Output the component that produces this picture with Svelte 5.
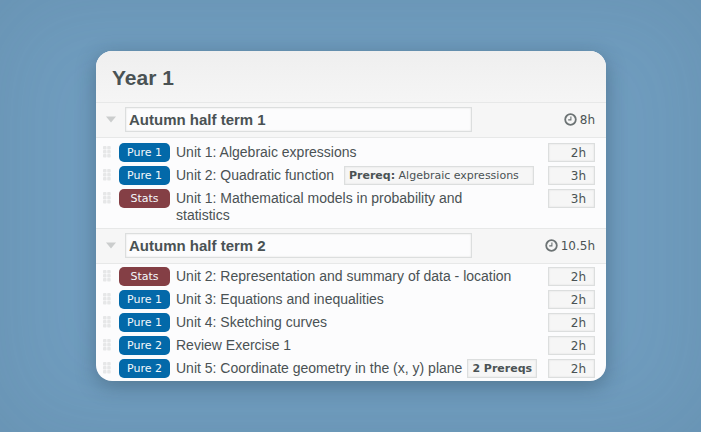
<script>
  let terms = $state([
    {
      name: 'Autumn half term 1',
      total: '8h',
      open: true,
      units: [
        { module: 'Pure 1', title: 'Unit 1: Algebraic expressions', hours: '2h' },
        { module: 'Pure 1', title: 'Unit 2: Quadratic function', hours: '3h', prereq: 'Algebraic expressions' },
        { module: 'Stats', title: 'Unit 1: Mathematical models in probability and statistics', hours: '3h' }
      ]
    },
    {
      name: 'Autumn half term 2',
      total: '10.5h',
      open: true,
      units: [
        { module: 'Stats', title: 'Unit 2: Representation and summary of data - location', hours: '2h' },
        { module: 'Pure 1', title: 'Unit 3: Equations and inequalities', hours: '2h' },
        { module: 'Pure 1', title: 'Unit 4: Sketching curves', hours: '2h' },
        { module: 'Pure 2', title: 'Review Exercise 1', hours: '2h' },
        { module: 'Pure 2', title: 'Unit 5: Coordinate geometry in the (x, y) plane', hours: '2h', prereqCount: 2 }
      ]
    }
  ]);
</script>

<main class="page">
  <article class="planner">
    <header class="year">
      <h1>Year 1</h1>
    </header>

    {#each terms as term}
      <section>
        <div class="term-header">
          <button
            class="toggle"
            class:closed={!term.open}
            onclick={() => (term.open = !term.open)}
            aria-label="Toggle term"
            aria-expanded={term.open}
          >
            <svg width="12" height="7" viewBox="0 0 12 7">
              <path d="M1 0.5h10L6 6.5z" fill="#cbcdcd" />
            </svg>
          </button>
          <input class="term-name" type="text" bind:value={term.name} aria-label="Term name" />
          <div class="total">
            <svg width="13" height="13" viewBox="0 0 13 13" fill="none" stroke="currentColor">
              <circle cx="6.5" cy="6.5" r="5.3" stroke-width="1.8" />
              <path d="M6.9 3.4v3.5H4.2" stroke-width="1.1" />
            </svg>
            <span>{term.total}</span>
          </div>
        </div>

        {#if term.open}
          <ul class="units">
            {#each term.units as unit}
              <li class="unit">
                <svg class="handle" width="8" height="12" viewBox="0 0 8 12" fill="#e6e7e8">
                  {#each [0, 4, 8] as y}
                    <rect x="0" {y} width="3.5" height="3.5" rx="0.8" />
                    <rect x="4.2" {y} width="3.5" height="3.5" rx="0.8" />
                  {/each}
                </svg>
                <span class="module" class:stats={unit.module === 'Stats'}>{unit.module}</span>
                <div class="body">
                  <span class="title">{unit.title}</span>
                  {#if unit.prereq}
                    <button class="prereq detail"><b>Prereq:</b> {unit.prereq}</button>
                  {:else if unit.prereqCount}
                    <button class="prereq"><b>{unit.prereqCount} Prereqs</b></button>
                  {/if}
                </div>
                <input class="hours" type="text" bind:value={unit.hours} aria-label="Hours" />
              </li>
            {/each}
          </ul>
        {/if}
      </section>
    {/each}
  </article>
</main>

<style>
  :global(body) {
    margin: 0;
  }

  .page {
    box-sizing: border-box;
    min-height: 100vh;
    padding: 51px 95px 51px 96px;
    background: #709dbf;
    box-shadow: inset 0 0 100px rgba(60, 95, 115, 0.16);
    color: #4a5254;
    font-family: 'DejaVu Sans', Verdana, sans-serif;
  }

  .planner {
    overflow: hidden;
    border-radius: 16px;
    background: #fcfcfd;
    box-shadow: 0 5px 20px rgba(30, 50, 65, 0.35);
  }

  .year {
    display: flex;
    align-items: center;
    height: 51px;
    padding: 0 16px;
    background: linear-gradient(#efefef, #f5f5f5);
  }

  h1 {
    margin: 0;
    padding-top: 2px;
    font: bold 21px/24px 'Liberation Sans', Arial, sans-serif;
  }

  /* Term bar */
  .term-header {
    display: flex;
    align-items: center;
    padding: 4px 11px 5px 9px;
    border-top: 1px solid #e7e8e8;
    border-bottom: 1px solid #e7e8e8;
    background: #f6f6f6;
  }

  .toggle {
    display: flex;
    width: 12px;
    margin-right: 8px;
    padding: 0;
    border: none;
    background: none;
    cursor: pointer;
  }

  .toggle.closed svg {
    transform: rotate(-90deg);
  }

  .term-name {
    box-sizing: border-box;
    flex: 0 1 347px;
    min-width: 0;
    height: 25px;
    padding: 0 3px;
    border: 1px solid #dcdede;
    border-radius: 0;
    background: #fcfcfd;
    box-shadow: inset 0 0 2px #dcdede;
    color: inherit;
    font: bold 15px/20px 'Liberation Sans', Arial, sans-serif;
  }

  .total {
    display: flex;
    align-items: center;
    gap: 3px;
    margin-left: auto;
    font-size: 12px;
    line-height: 16px;
  }

  .total svg {
    color: #6c7374;
  }

  /* Unit rows */
  .units {
    display: flex;
    flex-direction: column;
    gap: 4px;
    margin: 0;
    padding: 5px 11px 3px 7px;
    list-style: none;
  }

  section + section .units {
    padding-top: 3px;
  }

  .unit {
    display: flex;
    align-items: flex-start;
  }

  .handle {
    flex: none;
    margin: 3px 8px 0 0;
    cursor: grab;
  }

  .module {
    flex: none;
    width: 51px;
    margin-right: 6px;
    border-radius: 5px;
    background: #0369a9;
    color: #f4f8fb;
    font-size: 11px;
    line-height: 19px;
    text-align: center;
  }

  .module.stats {
    background: #843f45;
  }

  .body {
    display: flex;
    flex: 1;
    align-items: flex-start;
    gap: 5px;
    min-width: 0;
  }

  .title {
    max-width: 337px;
    padding: 1px 0;
    font: 14px/17px 'Liberation Sans', Arial, sans-serif;
  }

  .prereq {
    box-sizing: border-box;
    flex: none;
    height: 19px;
    padding: 0 4px;
    border: 1px solid #dcdede;
    background: #f6f6f6;
    box-shadow: inset 0 0 2px #dcdede;
    color: inherit;
    font-family: inherit;
    font-size: 11px;
    line-height: 17px;
    text-align: left;
  }

  .prereq.detail {
    width: 190px;
    margin-left: 5px;
  }

  .hours {
    box-sizing: border-box;
    flex: none;
    width: 47px;
    height: 19px;
    margin-left: 9px;
    padding: 0 8px;
    border: 1px solid #dcdede;
    border-radius: 0;
    background: #f6f6f6;
    box-shadow: inset 0 0 2px #dcdede;
    color: inherit;
    font-family: inherit;
    font-size: 12px;
    text-align: right;
  }
</style>
